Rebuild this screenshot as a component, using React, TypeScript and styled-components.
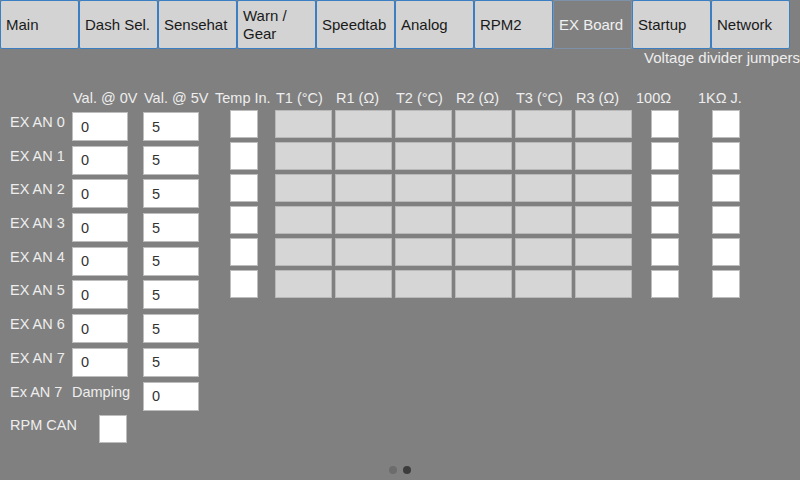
import React from "react";
import styled, { createGlobalStyle } from "styled-components";

const tabs = [
  "Main",
  "Dash Sel.",
  "Sensehat",
  "Warn /\nGear",
  "Speedtab",
  "Analog",
  "RPM2",
  "EX Board",
  "Startup",
  "Network",
];
const activeTab = "EX Board";

const channels = [0, 1, 2, 3, 4, 5, 6, 7];
const tableHeaders = [
  "Temp In.",
  "T1 (°C)",
  "R1 (Ω)",
  "T2 (°C)",
  "R2 (Ω)",
  "T3 (°C)",
  "R3 (Ω)",
  "100Ω",
  "1KΩ J.",
];

function App() {
  return (
    <>
      <GlobalStyle />
      <Screen>
        <TabBar>
          {tabs.map((t) => (
            <Tab key={t} $active={t === activeTab}>
              <TabText>{t}</TabText>
            </Tab>
          ))}
        </TabBar>
        <Body>
          <Caption>Voltage divider jumpers</Caption>
          <Panels>
            <LeftPanel>
              <LeftHeader>
                <span />
                <HeadText>Val. @ 0V</HeadText>
                <HeadText>Val. @ 5V</HeadText>
              </LeftHeader>
              <LeftGrid>
                {channels.map((n) => (
                  <React.Fragment key={n}>
                    <Label>EX AN {n}</Label>
                    <Field readOnly value="0" />
                    <Field readOnly value="5" />
                  </React.Fragment>
                ))}
                <Label>Ex AN 7</Label>
                <Label>Damping</Label>
                <Field readOnly value="0" />
                <Label>RPM CAN</Label>
                <Check $offset={27} />
              </LeftGrid>
            </LeftPanel>
            <RightPanel>
              <RightHeader>
                {tableHeaders.map((h) => (
                  <HeadText key={h}>{h}</HeadText>
                ))}
              </RightHeader>
              <RightGrid>
                {[0, 1, 2, 3, 4, 5].map((r) => (
                  <React.Fragment key={r}>
                    <Check />
                    {[0, 1, 2, 3, 4, 5].map((c) => (
                      <Readout key={c} />
                    ))}
                    <Check />
                    <Check />
                  </React.Fragment>
                ))}
              </RightGrid>
            </RightPanel>
          </Panels>
        </Body>
        <Pager>
          <Dot />
          <Dot $current />
        </Pager>
      </Screen>
    </>
  );
}
export default App;

const GlobalStyle = createGlobalStyle`
  body {
    margin: 0;
    background: #808080;
    font-family: "Liberation Sans", Arial, sans-serif;
  }
`;

const Screen = styled.div`
  width: 800px;
  height: 480px;
  display: flex;
  flex-direction: column;
  overflow: hidden;
  background: #808080;
`;

const TabBar = styled.div`
  display: flex;
  height: 49px;
`;

const Tab = styled.div<{ $active?: boolean }>`
  box-sizing: border-box;
  width: 79px;
  height: 49px;
  display: flex;
  align-items: center;
  padding-left: 5px;
  border: 1px solid ${(p) => (p.$active ? "#7d92a8" : "#3b7fc2")};
  border-radius: 2px;
  background: ${(p) => (p.$active ? "#808080" : "#d3d3d3")};
  color: ${(p) => (p.$active ? "#f0f0f0" : "#1a1a1a")};
`;

const TabText = styled.span`
  font-size: 15px;
  line-height: 18px;
  white-space: pre-line;
`;

const Body = styled.div`
  flex: 1;
  display: flex;
  flex-direction: column;
`;

const Caption = styled.div`
  margin-top: 1px;
  text-align: right;
  font-size: 15px;
  line-height: 16px;
  color: #eeeeee;
  white-space: nowrap;
`;

const Panels = styled.div`
  display: flex;
  gap: 15px;
  padding-left: 10px;
  margin-top: 23px;
`;

const LeftPanel = styled.div`
  display: flex;
  flex-direction: column;
`;

const leftColumns = "62px 71px 57px";

const LeftHeader = styled.div`
  display: grid;
  grid-template-columns: ${leftColumns};
  height: 18px;
  margin-bottom: 5px;
`;

const LeftGrid = styled.div`
  display: grid;
  grid-template-columns: ${leftColumns};
  grid-auto-rows: 29px;
  row-gap: 4.7px;
`;

const HeadText = styled.span`
  font-size: 14.5px;
  line-height: 18px;
  color: #eeeeee;
  white-space: nowrap;
  padding-left: 1px;
  &:first-child {
    padding-left: 0;
  }
`;

const Label = styled.span`
  align-self: start;
  margin-top: 1px;
  font-size: 14.5px;
  line-height: 18px;
  color: #eeeeee;
  white-space: nowrap;
`;

const Field = styled.input`
  box-sizing: border-box;
  width: 56px;
  height: 29px;
  margin: 0;
  padding: 0 0 0 8px;
  border: 1px solid #bdbdbd;
  border-radius: 0;
  background: #ffffff;
  color: #333333;
  font-family: "Liberation Sans", Arial, sans-serif;
  font-size: 14.5px;
  outline: none;
`;

const Check = styled.div<{ $offset?: number }>`
  box-sizing: border-box;
  width: 28px;
  height: 28px;
  justify-self: ${(p) => (p.$offset !== undefined ? "start" : "center")};
  margin-left: ${(p) => p.$offset ?? 0}px;
  background: #ffffff;
  border: 1px solid #bdbdbd;
`;

const RightPanel = styled.div`
  display: flex;
  flex-direction: column;
`;

const rightColumns = "repeat(7, 57px) 59px 57px";

const RightHeader = styled.div`
  display: grid;
  grid-template-columns: ${rightColumns};
  column-gap: 3px;
  height: 18px;
  margin-bottom: 3px;
`;

const RightGrid = styled.div`
  display: grid;
  grid-template-columns: ${rightColumns};
  column-gap: 3px;
  grid-auto-rows: 28px;
  row-gap: 4px;
`;

const Readout = styled.div`
  box-sizing: border-box;
  background: #d6d6d6;
  border: 1px solid #b9b9b9;
`;

const Pager = styled.div`
  display: flex;
  justify-content: center;
  gap: 6px;
  padding-bottom: 6px;
`;

const Dot = styled.div<{ $current?: boolean }>`
  width: 8px;
  height: 8px;
  border-radius: 50%;
  background: ${(p) => (p.$current ? "#3c3c3c" : "#6c6c6c")};
`;
